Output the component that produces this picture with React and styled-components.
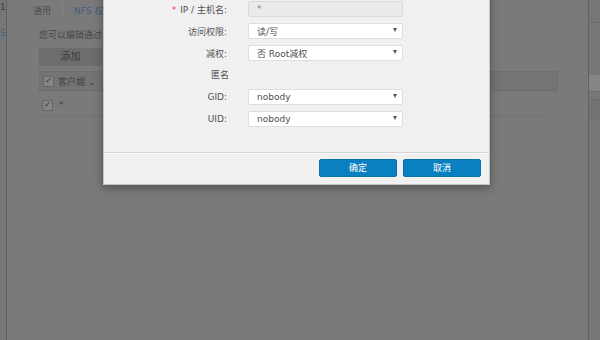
import React from 'react';
import styled, { createGlobalStyle } from 'styled-components';

const GlobalStyle = createGlobalStyle`
  html, body { margin: 0; padding: 0; }
  body {
    font-family: "DejaVu Sans", "Noto Sans CJK SC", sans-serif;
    font-size: 9px;
    background: #7a7a7a;
  }
`;

const Screen = styled.div`
  position: relative;
  display: flex;
  width: 600px;
  height: 340px;
  overflow: hidden;
  background: #7a7a7a;
`;

const LeftEdge = styled.div`
  width: 6px;
  border-right: 1px solid #616161;
  background: #767676;
  font-size: 9px;
  overflow: hidden;
  white-space: nowrap;
`;

const EdgeText = styled.div`
  padding-top: ${(p) => p.$top}px;
  color: ${(p) => (p.$blue ? '#3f6482' : '#3e3e3e')};
`;

const Window = styled.div`
  flex: 1;
  padding: 2px 0 0 26px;
  color: #474747;
`;

const Tabs = styled.div`
  display: flex;
  align-items: center;
  height: 16px;
`;

const Tab = styled.div`
  padding: 0 11px 0 0;
  margin-right: 11px;
  color: ${(p) => (p.$active ? '#3a5f80' : '#4d4d4d')};
  border-right: ${(p) => (p.$sep ? '1px solid #858585' : 'none')};
`;

const Hint = styled.div`
  margin: 10px 0 0 6px;
  height: 12px;
  white-space: nowrap;
`;

const AddButton = styled.div`
  margin: 8px 0 0 6px;
  width: 63px;
  height: 18px;
  line-height: 18px;
  text-align: center;
  background: #6d6d6d;
  color: #3c3c3c;
  font-size: 10px;
`;

const TableHead = styled.div`
  display: flex;
  align-items: center;
  gap: 4px;
  margin: 5px 0 0 6px;
  width: 514px;
  height: 18px;
  padding-left: 3px;
  background: #747474;
  border: 1px solid #6e6e6e;
  color: #404040;
`;

const TableRow = styled.div`
  display: flex;
  align-items: center;
  gap: 6px;
  margin: 3px 0 0 6px;
  width: 505px;
  height: 22px;
  padding-left: 3px;
  border-bottom: 1px solid #717171;
  color: #404040;
`;

const Check = styled.span`
  display: inline-flex;
  align-items: center;
  justify-content: center;
  width: 9px;
  height: 9px;
  border: 1px solid #666;
  background: #858585;
  border-radius: 1px;
  font-size: 8px;
  line-height: 1;
  color: #2c2c2c;
`;

const RightEdge = styled.div`
  width: 11px;
  border-left: 1px solid #626262;
  background: #777;
  display: flex;
  flex-direction: column;
`;

const Band = styled.div`
  height: ${(p) => p.$h}px;
  background: ${(p) => p.$bg || 'transparent'};
  border-bottom: ${(p) => (p.$line ? '1px solid #6c6c6c' : 'none')};
`;

const Modal = styled.div`
  position: absolute;
  left: 103px;
  top: -30px;
  width: 385px;
  background: #f0f0f0;
  border: 1px solid #c4c4c4;
  box-shadow: 0 3px 9px rgba(0, 0, 0, 0.35);
`;

const Body = styled.div`
  display: flex;
  flex-direction: column;
  gap: 6px;
  padding: 30px 0 25px 0;
  border-bottom: 1px solid #d2d2d2;
  box-shadow: 0 1px 0 #fafafa;
`;

const Row = styled.div`
  display: flex;
  align-items: center;
  height: 16px;
`;

const Label = styled.div`
  width: 123px;
  margin-right: 21px;
  text-align: right;
  color: #505050;
  white-space: nowrap;
`;

const Required = styled.span`
  color: #e2473c;
  margin-right: 4px;
`;

const Section = styled.div`
  height: 16px;
  line-height: 16px;
  padding-left: 107px;
  color: #505050;
`;

const Field = styled.div`
  position: relative;
  display: flex;
  align-items: center;
  width: 145px;
  height: 14px;
  padding: 0 0 0 8px;
  background: ${(p) => (p.$disabled ? '#eaeaea' : '#fff')};
  border: 1px solid ${(p) => (p.$disabled ? '#d9d9d9' : '#dedede')};
  border-radius: 2px;
  color: ${(p) => (p.$disabled ? '#8a8a8a' : '#4e4e4e')};
`;

const Arrow = styled.span`
  position: absolute;
  right: 5px;
  top: 4px;
  width: 0;
  height: 0;
  border-left: 2.5px solid transparent;
  border-right: 2.5px solid transparent;
  border-top: 4px solid #555;
`;

const Footer = styled.div`
  display: flex;
  justify-content: flex-end;
  gap: 6px;
  padding: 6px 8px 7px 0;
`;

const Button = styled.div`
  width: 76px;
  height: 16px;
  line-height: 16px;
  text-align: center;
  background: #0b80c1;
  border: 1px solid #0a72ad;
  border-radius: 2px;
  color: #fff;
`;

const fields = [
  { label: '访问权限:', value: '读/写' },
  { label: '减权:', value: '否 Root减权' },
];

const ids = [
  { label: 'GID:', value: 'nobody' },
  { label: 'UID:', value: 'nobody' },
];

const Select = ({ value }) => (
  <Field>
    {value}
    <Arrow />
  </Field>
);

export default function App() {
  return (
    <>
      <GlobalStyle />
      <Screen>
        <LeftEdge>
          <EdgeText $top={2}>1</EdgeText>
          <EdgeText $top={16} $blue>S</EdgeText>
        </LeftEdge>
        <Window>
          <Tabs>
            <Tab $sep>通用</Tab>
            <Tab $active>NFS 权限</Tab>
          </Tabs>
          <Hint>您可以编辑通过</Hint>
          <AddButton>添加</AddButton>
          <TableHead>
            <Check>✓</Check>
            <span>客户端 ⌄</span>
          </TableHead>
          <TableRow>
            <Check>✓</Check>
            <span>*</span>
          </TableRow>
        </Window>
        <RightEdge>
          <Band $h={22} $line />
          <Band $h={52} />
          <Band $h={16} $bg="#858585" $line />
          <Band $h={7} $line />
          <Band $h={20} $bg="#727272" />
        </RightEdge>

        <Modal>
          <Body>
            <Row>
              <Label>
                <Required>*</Required>IP / 主机名:
              </Label>
              <Field $disabled>*</Field>
            </Row>
            {fields.map((f) => (
              <Row key={f.label}>
                <Label>{f.label}</Label>
                <Select value={f.value} />
              </Row>
            ))}
            <Section>匿名</Section>
            {ids.map((f) => (
              <Row key={f.label}>
                <Label>{f.label}</Label>
                <Select value={f.value} />
              </Row>
            ))}
          </Body>
          <Footer>
            <Button>确定</Button>
            <Button>取消</Button>
          </Footer>
        </Modal>
      </Screen>
    </>
  );
}
